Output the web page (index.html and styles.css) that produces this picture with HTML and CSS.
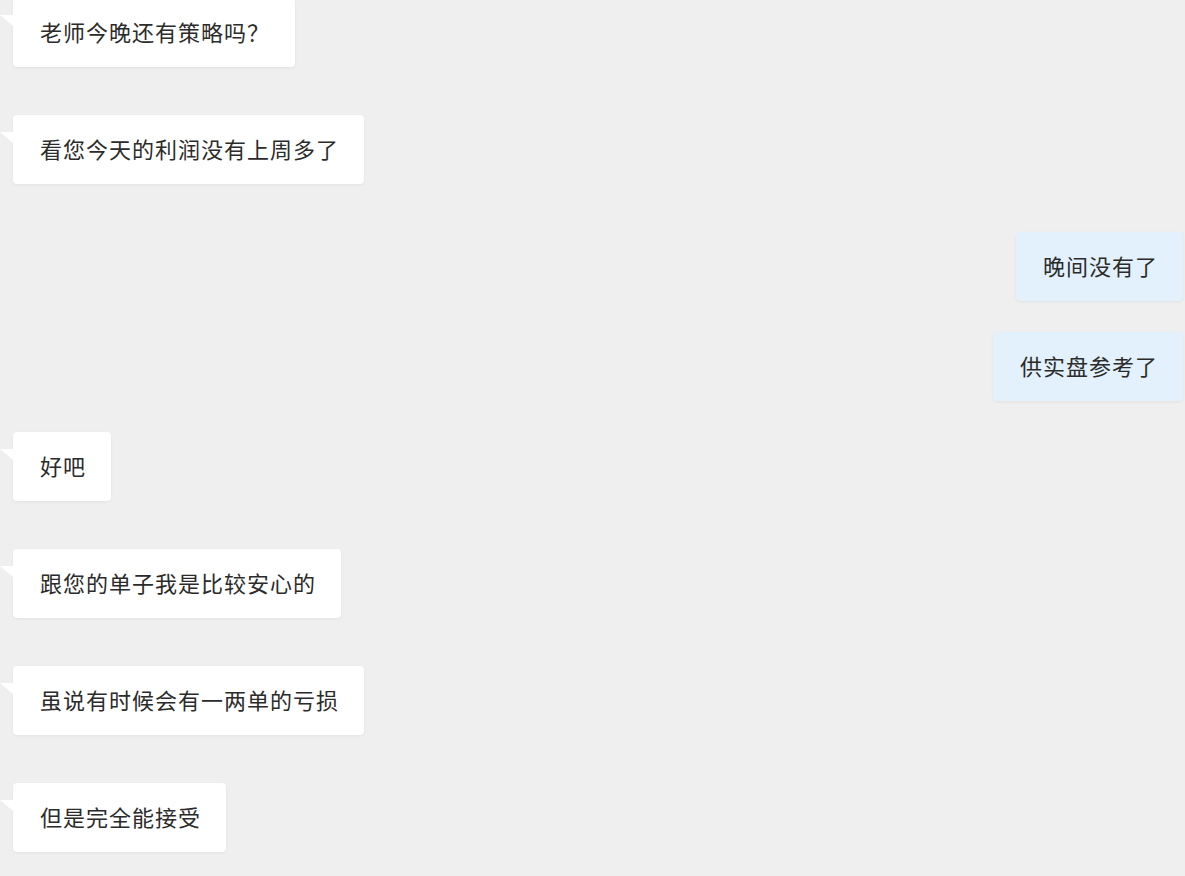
FILE: index.html
```html
<!DOCTYPE html>
<html lang="zh-CN">
<head>
<meta charset="utf-8">
<title>聊天记录</title>
<link rel="stylesheet" href="styles.css">
</head>
<body>
<div class="chat">
  <div class="row row-left"><div class="bubble bubble-left">老师今晚还有策略吗？</div></div>
  <div class="row row-left"><div class="bubble bubble-left">看您今天的利润没有上周多了</div></div>
  <div class="row row-right"><div class="bubble bubble-right">晚间没有了</div></div>
  <div class="row row-right"><div class="bubble bubble-right">供实盘参考了</div></div>
  <div class="row row-left"><div class="bubble bubble-left">好吧</div></div>
  <div class="row row-left"><div class="bubble bubble-left">跟您的单子我是比较安心的</div></div>
  <div class="row row-left"><div class="bubble bubble-left">虽说有时候会有一两单的亏损</div></div>
  <div class="row row-left"><div class="bubble bubble-left">但是完全能接受</div></div>
</div>
</body>
</html>
```

FILE: styles.css
```css
html, body {
  margin: 0;
  padding: 0;
  background: #efefef;
  height: 100%;
  overflow: hidden;
}

.chat {
  display: flex;
  flex-direction: column;
  padding: 0 2px 0 13px;
  margin-top: -2px;
  font-family: "Noto Sans CJK SC", "Microsoft YaHei", sans-serif;
}

.row {
  display: flex;
}

.row-left {
  justify-content: flex-start;
  margin-bottom: 48px;
}

.row-right {
  justify-content: flex-end;
  margin-bottom: 31px;
}

.bubble {
  position: relative;
  padding: 22px 25px 24px 27px;
  font-size: 22px;
  line-height: 23px;
  letter-spacing: 1px;
  color: #2b2b2b;
  border-radius: 4px;
  box-shadow: 0 1px 3px rgba(0, 0, 0, 0.06);
  white-space: nowrap;
}

.bubble-left {
  background: #ffffff;
}

.bubble-left::before {
  content: "";
  position: absolute;
  left: -13px;
  top: 17px;
  width: 0;
  height: 0;
  border-top: 11px solid #ffffff;
  border-left: 13px solid transparent;
}

.bubble-right {
  background: #e2f1fb;
}
```
